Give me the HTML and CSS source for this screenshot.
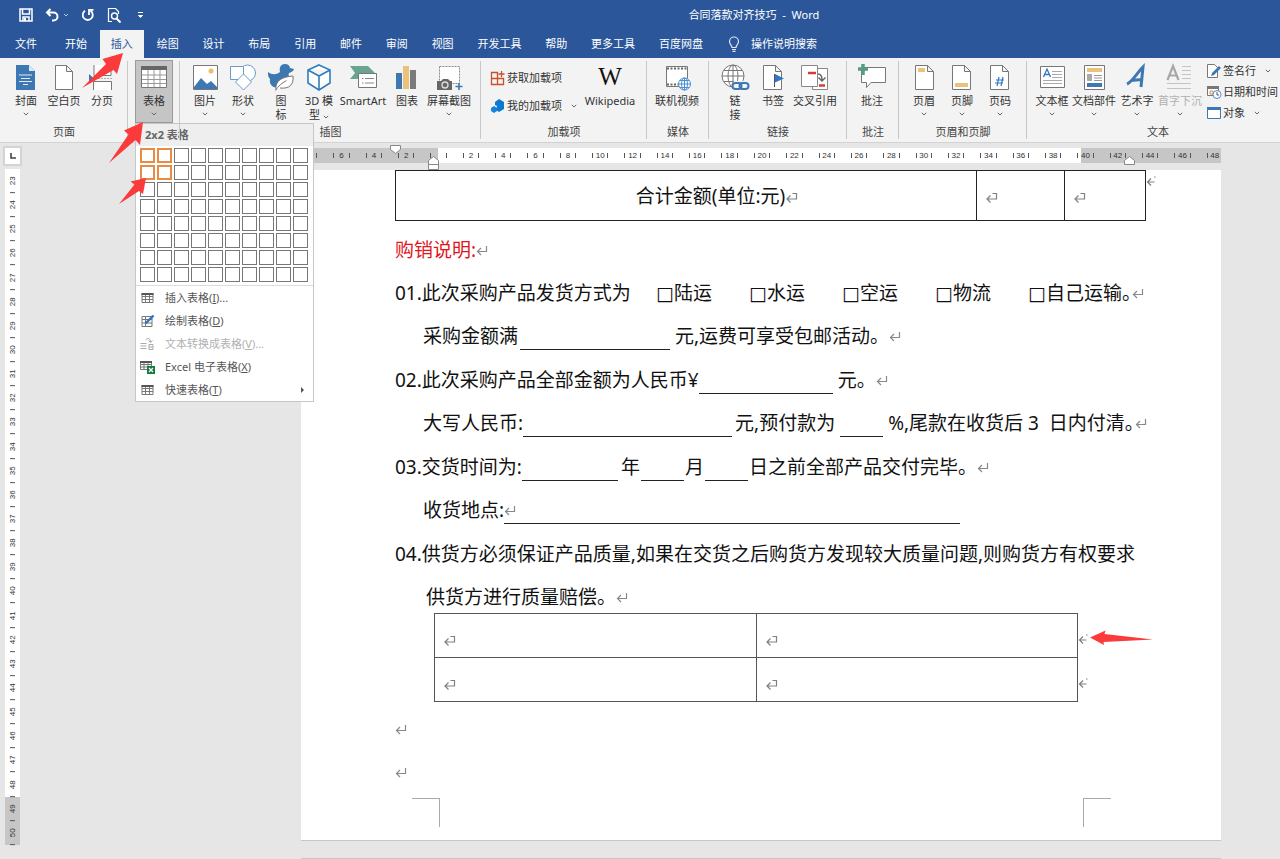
FILE: index.html
```html
<!DOCTYPE html>
<html lang="zh-CN">
<head>
<meta charset="utf-8">
<title>合同落款对齐技巧 - Word</title>
<link rel="stylesheet" href="styles.css">
</head>
<body>
<svg class="defs" width="0" height="0" aria-hidden="true">
  <symbol id="caret" viewBox="0 0 6 4"><path d="M.8.8 3 3 5.200.8" fill="none" stroke="#666"/></symbol>
  <symbol id="ret" viewBox="0 0 12 11"><path d="M10.500 1v5.500H2M5 3 1.500 6.500 5 10" fill="none" stroke="#888" stroke-width="1.200"/></symbol>
  <symbol id="cellret" viewBox="0 0 12 12"><path d="M7 1.500h4v5.500H2M5 3.500 1.500 7 5 10.500" fill="none" stroke="#808080" stroke-width="1.200"/></symbol>
  <symbol id="rowret" viewBox="0 0 12 11"><path d="M8.500 6H1.500M5 2.500 1.500 6 5 9.500M8 1h1.500" fill="none" stroke="#808080" stroke-width="1.200"/></symbol>
  <symbol id="tbl" viewBox="0 0 14 14"><path d="M1.500 2.500h11v9h-11zM1.500 5.500h11M1.500 8.500h11M5 3v8.500M9 3v8.500" fill="#fff" stroke="#777"/><path d="M1 2h12v2H1z" fill="#555"/></symbol>
</svg>

<header class="top">
  <div class="titlebar">
    <div class="quick">
      <button type="button" aria-label="保存"><svg width="14" height="14" viewBox="0 0 14 14"><path d="M1 1h12v12H1zM3.500 1v5h7V1M4 13V9h6v4" fill="none" stroke="#fff" stroke-width="1.500"/><path d="M5 10h2v3H5z" fill="#fff"/></svg></button>
      <button type="button" aria-label="撤消"><svg width="24" height="14" viewBox="0 0 24 14"><path d="M5.500 1 2 4.500 5.500 8M2 4.500h6.500a4 4 0 0 1 0 8H7" fill="none" stroke="#fff" stroke-width="2"/><path d="m19 6 2 2 2-2" fill="none" stroke="#b8c8e4"/></svg></button>
      <button type="button" aria-label="重复"><svg width="14" height="14" viewBox="0 0 14 14"><path d="M4 2.800a5 5 0 1 0 5.500 0M8 7V1.800h4.500" fill="none" stroke="#fff" stroke-width="1.800"/></svg></button>
      <button type="button" aria-label="打印预览"><svg width="14" height="16" viewBox="0 0 14 16"><path d="M5 14.500H1.500v-13h7l3 3V7" fill="none" stroke="#fff" stroke-width="1.200"/><circle cx="7.500" cy="9" r="3" fill="none" stroke="#fff" stroke-width="1.400"/><path d="m9.500 11.500 4 4" stroke="#fff" stroke-width="2"/></svg></button>
      <button type="button" aria-label="自定义快速访问工具栏"><svg width="12" height="8" viewBox="0 0 12 8"><path d="M5 1.500h5M5.500 4.500l2 2 2-2z" fill="#fff" stroke="#fff"/></svg></button>
    </div>
    <h1 class="title">合同落款对齐技巧&nbsp; -&nbsp; Word</h1>
  </div>
  <div class="tabrow">
    <button type="button" class="tab file">文件</button>
    <nav class="tabs">
      <button type="button" class="tab">开始</button><button type="button" class="tab active">插入</button><button type="button" class="tab">绘图</button><button type="button" class="tab">设计</button><button type="button" class="tab">布局</button><button type="button" class="tab">引用</button><button type="button" class="tab">邮件</button><button type="button" class="tab">审阅</button><button type="button" class="tab">视图</button><button type="button" class="tab">开发工具</button><button type="button" class="tab">帮助</button><button type="button" class="tab">更多工具</button><button type="button" class="tab">百度网盘</button>
    </nav>
    <button type="button" class="tell"><svg width="12" height="16" viewBox="0 0 12 16"><path d="M4 11.500C4 9 1.500 8.500 1.500 5.500a4.500 4.500 0 0 1 9 0C10.500 8.500 8 9 8 11.500zM4 13.500h4M4.500 15.300h3" fill="none" stroke="#dfe8f6" stroke-width="1.200"/></svg>操作说明搜索</button>
  </div>
</header>

<section class="ribbon" aria-label="插入">
  <div class="group g-page">
    <div class="tools">
      <button type="button" class="big"><svg width="30" height="28" viewBox="0 0 30 28"><path d="M5 2h13l6 6v19H5z" fill="#3e78b3"/><path d="M18 2v6h6z" fill="#dbe8f5"/><path d="M8 12h13M10 15.500h9M8 18.500h13M12 21.500h5" stroke="#dceafa"/></svg><span>封面</span><svg class="caret"><use href="#caret"/></svg></button>
      <button type="button" class="big"><svg width="30" height="28" viewBox="0 0 30 28"><path d="M6.500 2.500h11l6 6v18h-17zM17.500 2.500v6h6" fill="#fff" stroke="#777"/></svg><span>空白页</span></button>
      <button type="button" class="big"><svg width="30" height="28" viewBox="0 0 30 28"><path d="M7 2v10.500h17V2M6.500 27v-8.500h18V27" fill="#fff" stroke="#777"/><path d="M2 11v9l5-4.500z" fill="#3e78b3"/><path d="M8 15.500h17" stroke="#aaa" stroke-dasharray="2 1"/></svg><span>分页</span></button>
    </div>
    <h2>页面</h2>
  </div>
  <div class="group g-table">
    <div class="tools">
      <button type="button" class="big pressed" aria-expanded="true"><svg width="30" height="28" viewBox="0 0 30 28"><path d="M2.500 3.500h25v21h-25z" fill="#fff" stroke="#777"/><path d="M2 3h26v4H2z" fill="#666"/><path d="M3 12h24M3 16.500h24M3 20.500h24M9 7v17M15 7v17M21 7v17" stroke="#999"/></svg><span>表格</span><svg class="caret"><use href="#caret"/></svg></button>
    </div>
    <h2>&nbsp;</h2>
    <div class="menu" role="menu">
      <div class="menu-title">2x2 表格</div>
      <div class="picker" id="picker"></div>
      <div class="items">
        <button type="button" role="menuitem"><svg width="14" height="14"><use href="#tbl"/></svg><span>插入表格(<u>I</u>)...</span></button>
        <button type="button" role="menuitem"><svg width="14" height="14" viewBox="0 0 14 14"><path d="M1.500 2.500h10v10h-10zM1.500 5.500h10M1.500 9h10M5 3v9" fill="#fff" stroke="#777"/><path d="M5 9.500 13 1.500" stroke="#2f74c0" stroke-width="2.400"/></svg><span>绘制表格(<u>D</u>)</span></button>
        <button type="button" role="menuitem" disabled><svg width="14" height="14" viewBox="0 0 14 14"><path d="M0 6.500h6M0 9h6M0 11.500h6M5 3c3-3 5-1 5 2M8 3.500l2 2 2-2M8.500 7.500h4v5h-4zM8.500 10h4" fill="none" stroke="#aaa"/></svg><span>文本转换成表格(<u>V</u>)...</span></button>
        <button type="button" role="menuitem"><svg width="15" height="15" viewBox="0 0 15 15"><path d="M.5 1.500h11v8H.5zM.5 4.500h11M.5 7h11M4 2v8M8 2v8" fill="#fff" stroke="#777"/><path d="M0 1h12v2H0z" fill="#555"/><path d="M7 6h8v8H7z" fill="#107c41"/><path d="m9 8 4 4m0-4-4 4" stroke="#fff" stroke-width="1.300"/></svg><span>Excel 电子表格(<u>X</u>)</span></button>
        <button type="button" role="menuitem"><svg width="14" height="14"><use href="#tbl"/></svg><span>快速表格(<u>T</u>)</span><svg class="more" width="5" height="8" viewBox="0 0 5 8"><path d="M1 1v6l3-3z" fill="#555"/></svg></button>
      </div>
    </div>
  </div>
  <div class="group g-pics">
    <div class="tools">
      <button type="button" class="big"><svg width="30" height="28" viewBox="0 0 30 28"><path d="M3.500 2.500h24v24h-24z" fill="#fff" stroke="#777"/><path d="m4 24 7-9 6 6 4-3 6 6v2H4z" fill="#3e78b3"/><circle cx="21" cy="8" r="2.500" fill="#eabf66"/></svg><span>图片</span><svg class="caret"><use href="#caret"/></svg></button>
      <button type="button" class="big"><svg width="30" height="28" viewBox="0 0 30 28"><circle cx="19.500" cy="10" r="8" fill="#fff" stroke="#6b9bcb"/><path d="M2.500 3.500h13v13h-13z" fill="#fff" stroke="#6b9bcb"/><path d="m15.500 11 8 8-8 8-8-8z" fill="#fff" stroke="#6b9bcb"/></svg><span>形状</span><svg class="caret"><use href="#caret"/></svg></button>
      <button type="button" class="big"><svg width="30" height="28" viewBox="0 0 30 28"><path d="M14 9c-1-5 1-8 5-8 3 0 5 2 5 4l4 1c-1 3-3 3-5 4-1 2 0 3 1 5L13 25C6 25 3 21 4 16c-2-2-2-4-2-7 4 3 8 3 12 0z" fill="#3e78b3"/><path d="M10 27c-1-9 5-13 17-14 1 9-4 13-13 12M9.500 27.500c3-5 6-7 11-10" fill="#fff" stroke="#777"/></svg><span>图<br>标</span></button>
      <button type="button" class="big"><svg width="30" height="28" viewBox="0 0 30 28"><path d="m15 2 11 5v13l-11 7-11-7V7zM4 7l11 6 11-6M15 13v14" fill="#fff" stroke="#2f7dbd" stroke-width="1.600"/></svg><span>3D 模<br>型&nbsp;<svg class="caret inline"><use href="#caret"/></svg></span></button>
      <button type="button" class="big w50"><svg width="30" height="28" viewBox="0 0 30 28"><path d="M2 3h18l7 7-3 6H2l5-6z" fill="#68a490"/><path d="M10.500 10.500h18v14h-18z" fill="#fff" stroke="#777"/><path d="M14 15.500h1.500M17 15.500h9M14 20h1.500M17 20h9" stroke="#888"/></svg><span>SmartArt</span></button>
      <button type="button" class="big"><svg width="30" height="28" viewBox="0 0 30 28"><path d="M4 10h6v16H4z" fill="#3e78b3"/><path d="M11 3h6v23h-6z" fill="#eac27a"/><path d="M18 7h6v19h-6z" fill="#7b7b7b"/></svg><span>图表</span></button>
      <button type="button" class="big w46"><svg width="30" height="28" viewBox="0 0 30 28"><path d="M5.500 3.500h20v17h-20z" fill="#fff" stroke="#888" stroke-dasharray="2 1"/><path d="M3 18h4l2-2h5l2 2h2v9H3z" fill="#666"/><circle cx="11" cy="22" r="3" fill="#666" stroke="#ddd" stroke-width="1.300"/><path d="M25 20v7M21.500 23.500h7" stroke="#3e78b3" stroke-width="1.600"/></svg><span>屏幕截图</span><svg class="caret"><use href="#caret"/></svg></button>
    </div>
    <h2>插图</h2>
  </div>
  <div class="group g-addins">
    <div class="tools">
      <div class="list two">
        <button type="button"><svg width="16" height="16" viewBox="0 0 16 16"><path d="M1.500 2.500h6v6h-6zM1.500 8.500h6v6h-6zM7.500 8.500h6v6h-6zM11.500 1v6M8.500 4h6" fill="none" stroke="#c8512b" stroke-width="1.300"/></svg>获取加载项</button>
        <button type="button"><svg width="16" height="16" viewBox="0 0 16 16"><path d="m9 1 5 3v7l-5 3-3-2 1-4-2-1V4z" fill="#0f78d0"/><path d="m4 8 3 2v3l-3 2-3-2v-3z" fill="#1683d8"/></svg>我的加载项<svg class="caret gap"><use href="#caret"/></svg></button>
      </div>
      <button type="button" class="big w60"><span class="wiki">W</span><span>Wikipedia</span></button>
    </div>
    <h2>加载项</h2>
  </div>
  <div class="group g-media">
    <div class="tools">
      <button type="button" class="big w46"><svg width="30" height="28" viewBox="0 0 30 28"><path d="M4.500 3.500h21v20h-21z" fill="#fff" stroke="#777"/><path d="M5 5.500h20M5 21.500h13" stroke="#666" stroke-width="2" stroke-dasharray="2 1.500"/><circle cx="22.500" cy="21" r="6" fill="#fff" stroke="#4b8fd0"/><path d="M16.500 21h12M22.500 15v12M18 17.500h9M18 24.500h9" stroke="#4b8fd0" fill="none"/><ellipse cx="22.500" cy="21" rx="3" ry="6" fill="none" stroke="#4b8fd0"/></svg><span>联机视频</span></button>
    </div>
    <h2>媒体</h2>
  </div>
  <div class="group g-links">
    <div class="tools">
      <button type="button" class="big"><svg width="30" height="28" viewBox="0 0 30 28"><circle cx="13" cy="13" r="11" fill="#fff" stroke="#777"/><ellipse cx="13" cy="13" rx="5" ry="11" fill="none" stroke="#777"/><path d="M2 13h22M13 2v22M4 7.500h18M4 18.500h18" stroke="#777"/><path d="M14 18h15v9H12z" fill="#f3f3f3"/><rect x="12.500" y="20" width="9" height="6" rx="3" fill="none" stroke="#3e78b3" stroke-width="2"/><rect x="19.500" y="20" width="9" height="6" rx="3" fill="none" stroke="#3e78b3" stroke-width="2"/></svg><span>链<br>接</span></button>
      <button type="button" class="big"><svg width="30" height="28" viewBox="0 0 30 28"><path d="M5.500 2.500h12l6 6v18h-18zM17.500 2.500v6h6" fill="#fff" stroke="#777"/><path d="M16.500 11v13" stroke="#555"/><path d="m17 11 9 4.500-9 4z" fill="#2f78c6"/></svg><span>书签</span></button>
      <button type="button" class="big w46"><svg width="30" height="28" viewBox="0 0 30 28"><path d="M12.500 5.500h15v21h-15z" fill="#fff" stroke="#888"/><path d="M1.500 2.500h16v21h-16z" fill="#fff" stroke="#888"/><path d="M8 10h8" stroke="#d53c34" stroke-width="2.500"/><path d="M19 22.500h6" stroke="#d53c34" stroke-width="2.500"/><path d="M18 11c3 0 4 2 4 6M18.500 14.500 22 18l3.500-3.500" fill="none" stroke="#666" stroke-width="1.500"/></svg><span>交叉引用</span></button>
    </div>
    <h2>链接</h2>
  </div>
  <div class="group g-comment">
    <div class="tools">
      <button type="button" class="big"><svg width="30" height="28" viewBox="0 0 30 28"><path d="M4.500 4.500h24v15H14l-4.500 5v-5h-5z" fill="#fff" stroke="#777"/><path d="M6 1v11M1 6h10" stroke="#579b84" stroke-width="3.500"/></svg><span>批注</span></button>
    </div>
    <h2>批注</h2>
  </div>
  <div class="group g-head">
    <div class="tools">
      <button type="button" class="big"><svg width="30" height="28" viewBox="0 0 30 28"><path d="M6.500 2.500h12l6 6v18h-18zM18.500 2.500v6h6" fill="#fff" stroke="#777"/><path d="M9 5h7v4H9z" fill="#eac27a"/></svg><span>页眉</span><svg class="caret"><use href="#caret"/></svg></button>
      <button type="button" class="big"><svg width="30" height="28" viewBox="0 0 30 28"><path d="M5.500 2.500h12l6 6v18h-18zM17.500 2.500v6h6" fill="#fff" stroke="#777"/><path d="M8 20h13v4H8z" fill="#eac27a"/></svg><span>页脚</span><svg class="caret"><use href="#caret"/></svg></button>
      <button type="button" class="big"><svg width="30" height="28" viewBox="0 0 30 28"><path d="M5.500 2.500h12l6 6v18h-18zM17.500 2.500v6h6" fill="#fff" stroke="#777"/><path d="m14 14-2 9m6-9-2 9m-5-6h8m-9 3h8" stroke="#3279bd" stroke-width="1.200"/></svg><span>页码</span><svg class="caret"><use href="#caret"/></svg></button>
    </div>
    <h2>页眉和页脚</h2>
  </div>
  <div class="group g-text">
    <div class="tools">
      <button type="button" class="big"><svg width="30" height="28" viewBox="0 0 30 28"><path d="M3.500 3.500h24v21h-24z" fill="#fff" stroke="#777"/><path d="m6.500 14 3.500-8 3.500 8M8 11.500h4" fill="none" stroke="#3279bd" stroke-width="1.300"/><path d="M15 8.500h10M15 11.500h10M15 14.500h10M6 17.500h19M6 20.500h19" stroke="#aaa"/></svg><span>文本框</span><svg class="caret"><use href="#caret"/></svg></button>
      <button type="button" class="big w46"><svg width="30" height="28" viewBox="0 0 30 28"><path d="M5.500 2.500h20v24h-20z" fill="#fff" stroke="#777"/><path d="M8 5h15v4H8z" fill="#eac27a"/><path d="M8 11h5v7H8z" fill="#aaa"/><path d="M15 12.500h8M15 15h8M15 17.500h8" stroke="#999"/><path d="M8 20h15v4H8z" fill="#3e78b3"/></svg><span>文档部件</span><svg class="caret"><use href="#caret"/></svg></button>
      <button type="button" class="big w40"><svg width="30" height="28" viewBox="0 0 30 28"><path d="M5 21C10 19 15 10 21 4l-2 20M9 17.500l11-1" fill="none" stroke="#3e78b3" stroke-width="3"/></svg><span>艺术字</span><svg class="caret"><use href="#caret"/></svg></button>
      <button type="button" class="big w46" disabled><svg width="30" height="28" viewBox="0 0 30 28"><path d="m2.500 17 5.500-14 5.500 14M4.500 12.500h7" fill="none" stroke="#a8a8a8" stroke-width="2.200"/><path d="M17 3.500h9M17 7.500h9M17 11.500h9M17 15.500h9M2 20.500h24M2 25.500h24" stroke="#c4c4c4"/></svg><span>首字下沉</span><svg class="caret"><use href="#caret"/></svg></button>
      <div class="list three">
        <button type="button"><svg width="16" height="16" viewBox="0 0 16 16"><path d="M1.500 1.500h7l3 3v10h-10z" fill="#fff" stroke="#777"/><path d="m5 13 1-3 7-7 2 2-7 7z" fill="#3e78b3"/></svg>签名行<svg class="caret gap"><use href="#caret"/></svg></button>
        <button type="button"><svg width="16" height="16" viewBox="0 0 16 16"><path d="M1.500 2.500h11v9h-11z" fill="#fff" stroke="#777"/><path d="M1 2h12v3H1z" fill="#777"/><path d="M4 7h3v3H4z" fill="none" stroke="#d58a4d"/><circle cx="11" cy="10.500" r="4" fill="#fff" stroke="#4b8fd0"/><path d="M11 8v3h2" fill="none" stroke="#555"/></svg>日期和时间</button>
        <button type="button"><svg width="16" height="16" viewBox="0 0 16 16"><path d="M1.500 2.500h13v11h-13z" fill="#fff" stroke="#3e78b3"/><path d="M1 2h14v3H1z" fill="#3e78b3"/></svg>对象<svg class="caret gap"><use href="#caret"/></svg></button>
      </div>
    </div>
    <h2>文本</h2>
  </div>
</section>

<main class="workspace">
  <aside class="left">
    <div class="tabstop"><svg width="6" height="6" viewBox="0 0 6 6"><path d="M1 0v5h5" fill="none" stroke="#444" stroke-width="1.600"/></svg></div>
    <div class="vruler" id="vruler"></div>
  </aside>
  <div class="canvas">
    <div class="hruler-wrap">
      <div class="hruler" id="hruler"></div>
      <svg class="mark first" width="11" height="9" viewBox="0 0 11 9"><path d="M.5.5h10v4L5.500 8.500l-5-4z" fill="#fff" stroke="#888"/></svg>
      <svg class="mark hang" width="11" height="14" viewBox="0 0 11 14"><path d="M.5 13.500V4.500l5-4 5 4v9zM.5 8.500h10" fill="#fff" stroke="#888"/></svg>
      <svg class="mark right" width="11" height="9" viewBox="0 0 11 9"><path d="M.5 8.500v-4l5-4 5 4v4z" fill="#fff" stroke="#888"/></svg>
    </div>
    <article class="page">
      <div class="tablebox">
        <table class="total"><tr><td class="sum">合计金额(单位:元)<svg class="cr"><use href="#cellret"/></svg></td><td class="c1"><svg class="cr"><use href="#cellret"/></svg></td><td class="c2"><svg class="cr"><use href="#cellret"/></svg></td></tr></table>
        <svg class="rowend"><use href="#rowret"/></svg>
      </div>
      <h3 class="line red">购销说明:<svg class="pr"><use href="#ret"/></svg></h3>
      <div class="clause">
        <p class="line"><span class="lead">01.此次采购产品发货方式为</span><span class="opt"><span class="box">□</span>陆运</span><span class="opt"><span class="box">□</span>水运</span><span class="opt"><span class="box">□</span>空运</span><span class="opt"><span class="box">□</span>物流</span><span><span class="box">□</span>自己运输。</span><svg class="pr tight"><use href="#ret"/></svg></p>
        <p class="line in"><span>采购金额满</span><i class="blank b150"></i><span>元,运费可享受包邮活动。</span><svg class="pr"><use href="#ret"/></svg></p>
      </div>
      <div class="clause">
        <p class="line"><span>02.此次采购产品全部金额为人民币¥</span><i class="blank b134"></i><span>元。</span><svg class="pr"><use href="#ret"/></svg></p>
        <p class="line in"><span>大写人民币:</span><i class="blank b209"></i><span>元,预付款为</span><i class="blank b43 pre"></i><span>%,尾款在收货后&nbsp;3&nbsp; 日内付清。</span><svg class="pr tight"><use href="#ret"/></svg></p>
      </div>
      <div class="clause">
        <p class="line"><span>03.交货时间为:</span><i class="blank b96"></i><span>年</span><i class="blank b43"></i><span>月</span><i class="blank b43"></i><span>日之前全部产品交付完毕。</span><svg class="pr"><use href="#ret"/></svg></p>
        <p class="line in"><span>收货地点:</span><i class="blank b456"><svg class="pr"><use href="#ret"/></svg></i></p>
      </div>
      <div class="clause">
        <p class="line">04.供货方必须保证产品质量,如果在交货之后购货方发现较大质量问题,则购货方有权要求</p>
        <p class="line in more-in">供货方进行质量赔偿。<svg class="pr"><use href="#ret"/></svg></p>
      </div>
      <div class="tablebox sign-box">
        <table class="sign">
          <tr><td><svg class="cr"><use href="#cellret"/></svg></td><td><svg class="cr"><use href="#cellret"/></svg></td></tr>
          <tr><td><svg class="cr"><use href="#cellret"/></svg></td><td><svg class="cr"><use href="#cellret"/></svg></td></tr>
        </table>
        <svg class="rowend r1"><use href="#rowret"/></svg>
        <svg class="rowend r2"><use href="#rowret"/></svg>
        <svg class="arrow a4" width="64" height="16" viewBox="0 0 64 16"><path d="M0 7.500 15.500.5 14.500 4 63 9.500 13.500 12 14 15z" fill="#fb3a3c"/></svg>
      </div>
      <p class="line"><svg class="pr"><use href="#ret"/></svg></p>
      <p class="line"><svg class="pr"><use href="#ret"/></svg></p>
      <div class="crops"><i class="crop l"></i><i class="crop r"></i></div>
    </article>
    <div class="page next"></div>
  </div>
</main>

<svg class="arrow a1" width="42" height="37" viewBox="0 0 42 37"><path d="M41 1 20.500 7l3.500 5L0 36l31.500-18 3.500 4z" fill="#fb3a3c"/></svg>
<svg class="arrow a2" width="36" height="43" viewBox="0 0 36 43"><path d="M34 1 15 9.500l4.500 4L0 42l26.500-23 4.500 5z" fill="#fb3a3c"/></svg>
<svg class="arrow a3" width="28" height="28" viewBox="0 0 28 28"><path d="M27 1 11.500 4.500l4 3L0 27l20-13 4 3z" fill="#fb3a3c"/></svg>
<script src="app.js"></script>
</body>
</html>
```
FILE: styles.css
```css
* { box-sizing: border-box; }
body {
  margin: 0;
  height: 100vh;
  overflow: hidden;
  display: flex;
  flex-direction: column;
  background: #e6e6e6;
  color: #333;
  font: 11px/14px "Noto Sans", "Noto Sans CJK SC", sans-serif;
}
button { font: inherit; color: inherit; background: none; border: 0; padding: 0; white-space: nowrap; }
svg { display: block; flex: none; }
h1, h2, h3, p { margin: 0; font-weight: normal; font-size: inherit; }
.defs { position: absolute; }

.top { background: #2b579a; color: #fff; }
.titlebar { height: 30px; display: grid; grid-template-columns: 228px 1fr; align-items: center; }
.quick { display: flex; align-items: center; padding-left: 19px; gap: 12px; }
.title { text-align: center; }
.tabrow { display: flex; height: 28px; }
.tab { padding: 0 11px; height: 28px; }
.tab.file { margin: 0 6px 0 4px; }
.tab.active { background: #f3f3f3; color: #2b579a; }
.tabs { display: flex; justify-content: space-between; width: 660px; }
.tell { display: flex; align-items: center; gap: 11px; margin-left: 14px; }

.ribbon { display: flex; height: 85px; background: #f3f3f3; border-bottom: 1px solid #d2d2d2; }
.group { position: relative; flex: none; display: flex; flex-direction: column; padding-top: 2px; }
.group::after { content: ""; position: absolute; right: 0; top: 3px; bottom: 3px; width: 1px; background: #c8c8c8; }
.tools { display: flex; height: 63px; padding-left: 6px; }
.group h2 { text-align: center; line-height: 18px; color: #444; }
.g-page { width: 128px; }
.g-page .tools { padding-left: 7px; }
.g-table { width: 52px; z-index: 5; }
.g-table .tools { padding-left: 7px; }
.g-pics { width: 301px; }
.g-addins { width: 166px; }
.g-addins .tools { padding-left: 9px; }
.g-media { width: 62px; }
.g-media .tools { padding-left: 7px; }
.g-links { width: 138px; }
.g-links .tools { padding-left: 7px; }
.g-comment { width: 52px; }
.g-head { width: 128px; }
.g-text { width: 262px; }
.g-text::after { display: none; }

.big { width: 38px; height: 63px; display: flex; flex-direction: column; align-items: center; padding-top: 3px; }
.big > span { margin-top: 3px; }
.big:disabled, .items button:disabled { color: #b1b1b1; }
.w40 { width: 40px; }
.w46 { width: 46px; }
.w50 { width: 50px; }
.w60 { width: 60px; }
.big .wiki { font: 25px/28px "Liberation Serif", serif; color: #111; margin: 0; }
.pressed { background: #c5c5c5; outline: 1px solid #9a9a9a; outline-offset: -1px; }
.caret { width: 6px; height: 4px; margin-top: 4px; }
.caret.inline { display: inline-block; }
.caret.gap { margin: 0 0 0 8px; }
.list { display: flex; flex-direction: column; }
.list button { display: flex; align-items: center; gap: 1px; }
.list.two { width: 90px; gap: 12px; padding-top: 10px; }
.list.three { gap: 5px; padding: 3px 0 0 3px; }

.menu { position: absolute; left: 7px; top: 65px; width: 179px; background: #fff; border: 1px solid #c6c6c6; }
.menu-title { background: #eee; color: #666; font-weight: bold; line-height: 22px; padding-left: 9px; }
.picker { display: grid; grid-template-columns: repeat(10, 15px); gap: 2px; padding: 2px 0 3px 4px; border-bottom: 1px solid #dcdcdc; }
.picker button { height: 15px; border: 1px solid #777; background: #fff; }
.picker .on { border: 2px solid #ea8b45; }
.items { display: flex; flex-direction: column; gap: 1px; padding-top: 1px; color: #555; }
.items button { display: flex; align-items: center; height: 22px; padding: 0 8px 0 4px; text-align: left; }
.items button > svg:first-child { margin-right: 10px; width: 15px; }
.items .more { margin-left: auto; }

.workspace { flex: 1; min-height: 0; display: flex; }
.left { width: 22px; padding-top: 3px; flex: none; }
.tabstop { width: 19px; height: 20px; margin-left: 3px; background: #fff; border: 2px solid #d4d4d4; display: flex; align-items: center; justify-content: center; }
.vruler { display: grid; grid-auto-rows: 1fr; width: 15px; height: 676px; margin: 3px 0 0 5px; background: linear-gradient(#fff 628px, #c6c6c6 628px); }
.vruler span { writing-mode: vertical-rl; transform: rotate(180deg); display: flex; align-items: center; justify-content: center; font: 8px/15px "Liberation Sans", sans-serif; position: relative; min-height: 0; }
.vruler span::before { content: ""; position: absolute; top: 0; left: 5px; width: 5px; height: 1px; background: #555; }
.canvas { flex: 1; min-width: 0; padding: 0 59px 0 279px; }
.hruler-wrap { position: relative; height: 27px; padding-top: 5px; }
.hruler { display: grid; grid-auto-flow: column; grid-auto-columns: 1fr; height: 15px; margin: 0 -10px 0 -8px; background: linear-gradient(90deg, #c6c6c6 145px, #fff 145px, #fff calc(100% - 150px), #c6c6c6 calc(100% - 150px), #c6c6c6 calc(100% - 10px), transparent 0); }
.hruler span { display: flex; align-items: center; justify-content: space-between; padding: 0 8px; min-width: 0; font: 8px/15px "Liberation Sans", sans-serif; }
.hruler span::before, .hruler span::after { content: ""; width: 1px; height: 5px; background: #555; }
.hruler span:last-child::after { visibility: hidden; }
.mark { position: absolute; }
.mark.first { left: 89px; top: 2px; }
.mark.hang { left: 127px; top: 13px; }
.mark.right { right: 86px; top: 13px; }

.page { background: #fff; padding: 0 75px 13px 94px; border-bottom: 1px solid #c6c6c6; color: #111; font-size: 19px; }
.page.next { margin-top: 17px; height: 20px; border-top: 1px solid #c6c6c6; }
.tablebox { position: relative; margin-bottom: 7px; }
table { border-collapse: collapse; table-layout: fixed; width: 100%; }
td { border: 1px solid #222; padding: 0 0 0 8px; }
.total td { height: 50px; padding-top: 2px; }
.total .sum { text-align: center; padding-left: 62px; }
.total .c1 { width: 88px; }
.total .c2 { width: 81px; }
.cr { display: inline-block; width: 13px; height: 12px; vertical-align: middle; }
.pr { width: 12px; height: 11px; }
.rowend { position: absolute; width: 12px; height: 11px; right: -12px; top: 6px; }
.line { display: flex; align-items: center; height: 43px; line-height: 43px; white-space: nowrap; }
.red { color: #e0161c; height: 44px; }
.clause { margin-bottom: 1px; }
.in { padding-left: 28px; }
.more-in { padding-left: 31px; }
.lead { width: 261px; }
.opt { width: 93px; }
.box { font-family: "DejaVu Sans", sans-serif; line-height: 19px; }
.blank { flex: none; height: 26px; border-bottom: 1px solid #222; margin-right: 3px; }
.blank .pr { margin-top: 7px; }
.b43 { width: 43px; margin: 0 1px; }
.b96 { width: 96px; }
.b134 { width: 134px; margin-right: 5px; }
.b150 { width: 150px; margin: 0 5px 0 2px; }
.b209 { width: 209px; }
.b456 { width: 456px; }
.blank.pre { margin: 0 5px; }
.tight { margin-left: -9px; }
.sign-box { margin: -7px 68px 6px 39px; }
.sign td { height: 44px; padding-top: 9px; border-color: #555; }
.sign-box .r1 { top: 21px; }
.sign-box .r2 { top: 65px; }
.crops { display: flex; justify-content: space-between; padding: 4px 35px 0 17px; }
.crop { width: 28px; height: 29px; border-top: 1px solid #aaa; }
.crop.l { border-right: 1px solid #aaa; }
.crop.r { border-left: 1px solid #aaa; }

.arrow { position: absolute; z-index: 10; pointer-events: none; }
.a1 { left: 82px; top: 52px; }
.a2 { left: 109px; top: 121px; }
.a3 { left: 119px; top: 177px; }
.a4 { right: -76px; top: 17px; }
```
FILE: app.js
```js
const picker = document.getElementById('picker');
for (let row = 0; row < 8; row++) {
  for (let col = 0; col < 10; col++) {
    const cell = document.createElement('button');
    cell.type = 'button';
    cell.setAttribute('aria-label', (col + 1) + 'x' + (row + 1));
    if (row < 2 && col < 2) cell.className = 'on';
    picker.append(cell);
  }
}

const addLabel = (parent, text) => {
  const label = document.createElement('span');
  label.textContent = text;
  parent.append(label);
};
const across = document.getElementById('hruler');
for (let n = -8; n <= 48; n += 2) addLabel(across, n === 0 ? '' : Math.abs(n));
const down = document.getElementById('vruler');
for (let n = 23; n <= 50; n++) addLabel(down, n);
```
